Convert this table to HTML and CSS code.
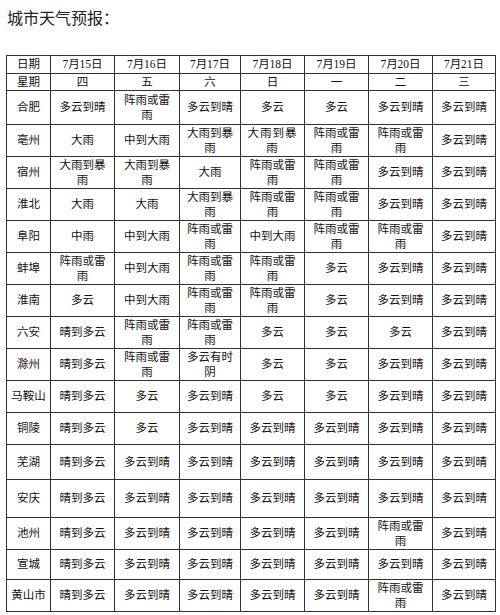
FILE: index.html
```html
<!DOCTYPE html>
<html lang="zh-CN">
<head>
<meta charset="utf-8">
<title>城市天气预报</title>
<link rel="stylesheet" href="styles.css">
</head>
<body>
<h1 class="title">城市天气预报：</h1>
<table class="forecast">
<colgroup>
<col class="c-city"><col class="c64"><col class="c65"><col class="c61"><col class="c64"><col class="c64"><col class="c64"><col class="c63">
</colgroup>
<tr class="h18"><td>日期</td><td>7月15日</td><td>7月16日</td><td>7月17日</td><td>7月18日</td><td>7月19日</td><td>7月20日</td><td>7月21日</td></tr>
<tr class="h17"><td>星期</td><td>四</td><td>五</td><td>六</td><td>日</td><td>一</td><td>二</td><td>三</td></tr>
<tr class="h34"><td>合肥</td><td>多云到晴</td><td>阵雨或雷雨</td><td>多云到晴</td><td>多云</td><td>多云</td><td>多云到晴</td><td>多云到晴</td></tr>
<tr class="h32"><td>亳州</td><td>大雨</td><td>中到大雨</td><td>大雨到暴雨</td><td class="wide">大雨到暴雨</td><td>阵雨或雷雨</td><td>阵雨或雷雨</td><td>多云到晴</td></tr>
<tr class="h32"><td>宿州</td><td>大雨到暴雨</td><td>大雨到暴雨</td><td>大雨</td><td>阵雨或雷雨</td><td>阵雨或雷雨</td><td>多云到晴</td><td>多云到晴</td></tr>
<tr class="h32"><td>淮北</td><td>大雨</td><td>大雨</td><td>大雨到暴雨</td><td>阵雨或雷雨</td><td>阵雨或雷雨</td><td>多云到晴</td><td>多云到晴</td></tr>
<tr class="h32"><td>阜阳</td><td>中雨</td><td>中到大雨</td><td>阵雨或雷雨</td><td>中到大雨</td><td>阵雨或雷雨</td><td>阵雨或雷雨</td><td>多云到晴</td></tr>
<tr class="h32"><td>蚌埠</td><td>阵雨或雷雨</td><td>中到大雨</td><td>阵雨或雷雨</td><td>阵雨或雷雨</td><td>多云</td><td>多云到晴</td><td>多云到晴</td></tr>
<tr class="h32"><td>淮南</td><td>多云</td><td>中到大雨</td><td>阵雨或雷雨</td><td>阵雨或雷雨</td><td>多云</td><td>多云到晴</td><td>多云到晴</td></tr>
<tr class="h32"><td>六安</td><td>晴到多云</td><td>阵雨或雷雨</td><td>阵雨或雷雨</td><td>多云</td><td>多云</td><td>多云</td><td>多云到晴</td></tr>
<tr class="h32"><td>滁州</td><td>晴到多云</td><td>阵雨或雷雨</td><td>多云有时阴</td><td>多云</td><td>多云</td><td>多云到晴</td><td>多云到晴</td></tr>
<tr class="h32"><td>马鞍山</td><td>晴到多云</td><td>多云</td><td>多云到晴</td><td>多云</td><td>多云</td><td>多云到晴</td><td>多云到晴</td></tr>
<tr class="h32"><td>铜陵</td><td>晴到多云</td><td>多云</td><td>多云到晴</td><td>多云到晴</td><td>多云到晴</td><td>多云到晴</td><td>多云到晴</td></tr>
<tr class="h35"><td>芜湖</td><td>晴到多云</td><td>多云到晴</td><td>多云到晴</td><td>多云到晴</td><td>多云到晴</td><td>多云到晴</td><td>多云到晴</td></tr>
<tr class="h38"><td>安庆</td><td>晴到多云</td><td>多云到晴</td><td>多云到晴</td><td>多云到晴</td><td>多云到晴</td><td>多云到晴</td><td>多云到晴</td></tr>
<tr class="h32"><td>池州</td><td>晴到多云</td><td>多云到晴</td><td>多云到晴</td><td>多云到晴</td><td>多云到晴</td><td>阵雨或雷雨</td><td>多云到晴</td></tr>
<tr class="h30"><td>宣城</td><td>晴到多云</td><td>多云到晴</td><td>多云到晴</td><td>多云到晴</td><td>多云到晴</td><td>多云到晴</td><td>多云到晴</td></tr>
<tr class="h32"><td>黄山市</td><td>晴到多云</td><td>多云到晴</td><td>多云到晴</td><td>多云到晴</td><td>多云到晴</td><td>阵雨或雷雨</td><td>多云到晴</td></tr>
</table>
</body>
</html>
```
FILE: styles.css
```css
html, body {
  margin: 0;
  padding: 0;
  background: #ffffff;
}
body {
  padding: 7px 0 0 6px;
  font-family: "Noto Sans CJK SC", sans-serif;
  color: #1a1a1a;
}
.title {
  margin: 0 0 0 1px;
  font-size: 16px;
  line-height: 20px;
  font-weight: 400;
  color: #222222;
}
.forecast {
  margin-top: 28px;
  border-collapse: collapse;
  table-layout: fixed;
  width: 490px;
}
.c-city { width: 44px; }
.c64 { width: 64px; }
.c65 { width: 65px; }
.c61 { width: 61px; }
.c63 { width: 63px; }
.forecast td {
  border: 1px solid #333333;
  padding: 0 5px;
  text-align: center;
  vertical-align: middle;
  font-family: "Liberation Serif", "Noto Sans CJK SC", serif;
  font-size: 11.5px;
  line-height: 15px;
  color: #111111;
  box-sizing: border-box;
}
.forecast td:first-child {
  padding: 0 2px;
}
.forecast td.wide {
  letter-spacing: 1px;
  padding: 0 3px;
}
.h18 td { height: 18px; }
.h17 td { height: 17px; }
.h34 td { height: 34px; }
.h32 td { height: 32px; }
.h35 td { height: 35px; }
.h38 td { height: 38px; }
.h30 td { height: 30px; }
```
